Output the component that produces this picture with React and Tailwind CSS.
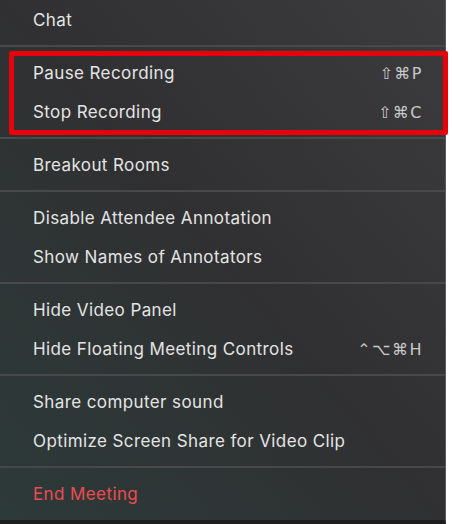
import React from 'react';

const sections = [
  [{ label: 'Chat' }],
  [
    { label: 'Pause Recording', keys: '⇧⌘P' },
    { label: 'Stop Recording', keys: '⇧⌘C' },
  ],
  [{ label: 'Breakout Rooms' }],
  [{ label: 'Disable Attendee Annotation' }, { label: 'Show Names of Annotators' }],
  [{ label: 'Hide Video Panel' }, { label: 'Hide Floating Meeting Controls', keys: '⌃⌥⌘H' }],
  [{ label: 'Share computer sound' }, { label: 'Optimize Screen Share for Video Clip' }],
  [{ label: 'End Meeting', danger: true }],
];

const MenuRow = ({ label, keys, danger }) => (
  <div className="h-[39px] flex items-center justify-between pl-[33px] pr-[22px] pt-[2px]">
    <span className={danger ? 'text-[#ee4b4f]' : 'text-[#e4e4e4]'}>{label}</span>
    {keys && (
      <span className="text-[#c9c9c9] tracking-[1.5px] font-['DejaVu_Sans','Liberation_Sans',sans-serif] text-[16px]">
        {keys}
      </span>
    )}
  </div>
);

export default function App() {
  return (
    <div className="w-[452px] h-[524px] bg-white overflow-hidden">
      <div className="relative w-[446px] h-[524px] border-r border-[#5a5a5c] border-b-[4px] border-b-[#1e1e1f] bg-linear-to-tr from-[#2c3a39] via-[#303032] to-[#3c3c3e] font-['Inter','Liberation_Sans',sans-serif] text-[17px] tracking-[0.4px] leading-none">
        {sections.map((rows, i) => (
          <div key={i}>
            {i > 0 && <div className="h-[2px] bg-[#49494b]" />}
            <div className={i === 0 ? 'pb-[6px]' : 'py-[6px]'}>
              {rows.map((r) => (
                <MenuRow key={r.label} {...r} />
              ))}
            </div>
          </div>
        ))}

        {/* highlight box drawn over the recording items */}
        <div className="absolute left-[9px] top-[51px] w-[439px] h-[84px] border-[5px] border-[#e8000b] rounded-[2px]" />
      </div>
    </div>
  );
}
